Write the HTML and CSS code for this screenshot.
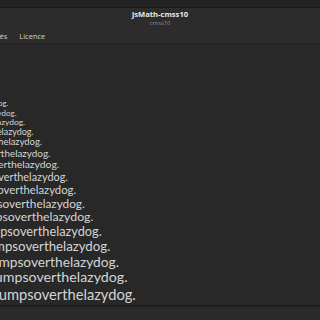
FILE: index.html
```html
<!doctype html>
<html>
  <head>
    <meta charset=utf-8>
    <title>jsMath-cmss10</title>
    <link rel="stylesheet" href="styles.css">
  </head>
  <body>
    <div class="window">
      <div class="topstrip"></div>
      <header class="headerbar">
        <div class="title">jsMath-cmss10</div>
        <div class="subtitle">cmss10</div>
      </header>
      <nav class="tabs">
        <span class="tab">Propriétés</span>
        <span class="tab">Licence</span>
      </nav>
      <main class="waterfall">
        <p class="line s1">Thequickbrownfoxjumpsoverthelazydog.</p>
        <p class="line s2">Thequickbrownfoxjumpsoverthelazydog.</p>
        <p class="line s3">Thequickbrownfoxjumpsoverthelazydog.</p>
        <p class="line s4">Thequickbrownfoxjumpsoverthelazydog.</p>
        <p class="line s5">Thequickbrownfoxjumpsoverthelazydog.</p>
        <p class="line s6">Thequickbrownfoxjumpsoverthelazydog.</p>
        <p class="line s7">Thequickbrownfoxjumpsoverthelazydog.</p>
        <p class="line s8">Thequickbrownfoxjumpsoverthelazydog.</p>
        <p class="line s9">Thequickbrownfoxjumpsoverthelazydog.</p>
        <p class="line s10">Thequickbrownfoxjumpsoverthelazydog.</p>
        <p class="line s11">Thequickbrownfoxjumpsoverthelazydog.</p>
        <p class="line s12">Thequickbrownfoxjumpsoverthelazydog.</p>
        <p class="line s13">Thequickbrownfoxjumpsoverthelazydog.</p>
        <p class="line s14">Thequickbrownfoxjumpsoverthelazydog.</p>
        <p class="line s15">Thequickbrownfoxjumpsoverthelazydog.</p>
        <p class="line s16">Thequickbrownfoxjumpsoverthelazydog.</p>
      </main>
      <footer class="bottombar"></footer>
    </div>
  </body>
</html>
```

FILE: styles.css
```css
* {
  box-sizing: border-box;
}
body {
  margin: 0;
  background: #282828;
  font-family: "Open Sans", "Noto Sans", sans-serif;
  overflow: hidden;
}
.window {
  width: 320px;
  height: 320px;
  display: flex;
  flex-direction: column;
  overflow: hidden;
}

.topstrip {
  height: 8px;
  background: #232323;
  border-bottom: 1px solid #1b1b1b;
}

.headerbar {
  height: 21px;
  background: #2c2c2c;
  display: flex;
  flex-direction: column;
  align-items: center;
  padding-top: 2px;
}
.title {
  font-size: 7.6px;
  font-weight: bold;
  color: #e8e8e8;
  line-height: 9px;
}
.subtitle {
  font-size: 6px;
  color: #8c8c8c;
  line-height: 8px;
}

.tabs {
  height: 15px;
  background: #2c2c2c;
  border-bottom: 1px solid #242424;
  display: flex;
  align-items: center;
  gap: 12px;
  margin-left: -29px;
  white-space: nowrap;
}
.tab {
  font-size: 7.5px;
  color: #d0d0d0;
}

.waterfall {
  flex: 1;
  padding-top: 56px;
  margin-left: -125px;
  white-space: nowrap;
}
.line {
  margin: 0;
  font-family: "Lato", sans-serif;
  color: #d4d4d4;
  line-height: 1.14;
}
.s1 { font-size: 7.5px; }
.s2 { font-size: 7.98px; }
.s3 { font-size: 8.46px; }
.s4 { font-size: 8.94px; }
.s5 { font-size: 9.42px; }
.s6 { font-size: 9.9px; }
.s7 { font-size: 10.38px; }
.s8 { font-size: 10.86px; }
.s9 { font-size: 11.34px; }
.s10 { font-size: 11.82px; }
.s11 { font-size: 12.3px; }
.s12 { font-size: 12.78px; }
.s13 { font-size: 13.26px; }
.s14 { font-size: 13.74px; }
.s15 { font-size: 14.22px; }
.s16 { font-size: 14.7px; }

.bottombar {
  height: 15px;
  background: #2b2b2b;
  border-top: 2px solid #1e1e1e;
}
```
